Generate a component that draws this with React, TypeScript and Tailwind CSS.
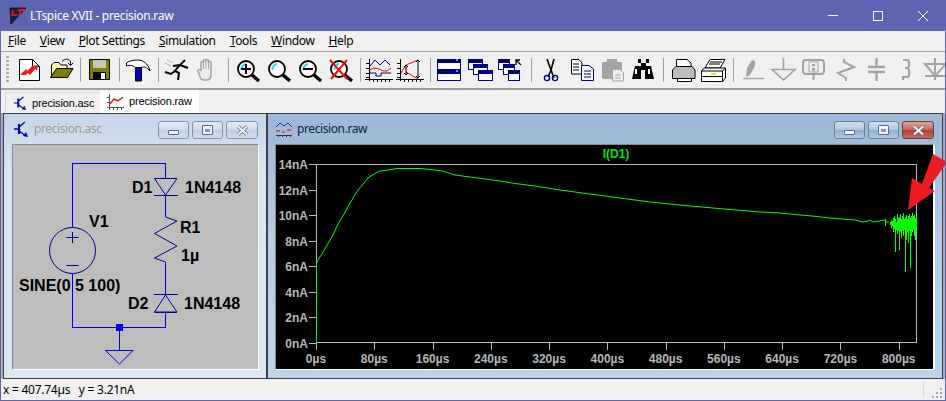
import React from "react";

const NAVY = "#000080";
const G = "#a3a3a3";

function Ic({ children }: { children: React.ReactNode }) {
  return (
    <div className="w-[31px] h-[24px] shrink-0">
      <svg width="31" height="24" viewBox="0 0 31 24" fill="none">{children}</svg>
    </div>
  );
}
const Sep = () => (
  <div className="w-[8px] h-[24px] shrink-0 flex justify-center">
    <div className="w-[1px] h-full bg-[#a0a0a0]" />
  </div>
);

function Lens({ children }: { children?: React.ReactNode }) {
  return (
    <g>
      <path d="M20 17 L27 23" stroke="#000" strokeWidth="3.4" />
      <circle cx="14" cy="11" r="8" fill="#fff" stroke="#000" strokeWidth="1.8" />
      <path d="M9.5 12 A5.5 5.5 0 0 1 14 6" stroke="#19d7e6" strokeWidth="1.8" />
      {children}
    </g>
  );
}
function PlotAxes() {
  return (
    <path
      d="M5.5 1V23M1 21.5H29M2 5.5H5M2 10.5H5M2 15.5H5M2 19.5H5M9.5 21V24M13.5 21V24M17.5 21V24M21.5 21V24M25.5 21V24"
      stroke="#000"
      shapeRendering="crispEdges"
    />
  );
}
function Win({ x, y, w, h, tb = 4 }: { x: number; y: number; w: number; h: number; tb?: number }) {
  return (
    <g shapeRendering="crispEdges">
      <rect x={x + 0.5} y={y + 0.5} width={w} height={h} fill="#fff" stroke={NAVY} />
      <rect x={x} y={y} width={w + 1} height={tb} fill={NAVY} />
    </g>
  );
}
function Transistor({ size = 16 }: { size?: number }) {
  return (
    <svg width={size} height={size} viewBox="0 0 16 16" fill="none">
      <path d="M6 3V13" stroke="#0000c0" strokeWidth="2.2" />
      <path d="M1 8H6M6 6L12 1M6 10L13 15" stroke="#0000c0" strokeWidth="1.4" />
      <path d="M10 15L15 16L13 11Z" fill="#0000c0" />
    </svg>
  );
}

const Toolbar = () => (
  <div className="h-[36px] flex items-center overflow-hidden">
    <div className="shrink-0 ml-[5px] mr-[5px] w-[3px] h-[28px] bg-[repeating-linear-gradient(to_bottom,#a8a8a8_0_2px,transparent_2px_4px)]" />
    {/* new */}
    <Ic>
      <path d="M5.5 1.5H18.5L25.5 8.5V22.5H5.5Z" fill="#fff" stroke="#000" />
      <path d="M18.5 1.5V8.5H25.5" stroke="#000" />
      <path d="M6 17L12 11L13.5 13L18 8L24 7L23 12.5L21 11L16 17L14 15L11.5 17Z" fill="#f01818" />
    </Ic>
    {/* open */}
    <Ic>
      <defs>
        <pattern id="dy" width="2" height="2" patternUnits="userSpaceOnUse">
          <rect width="2" height="2" fill="#ffff60" />
          <rect width="1" height="1" fill="#fff" />
          <rect x="1" y="1" width="1" height="1" fill="#fff" />
        </pattern>
      </defs>
      <path d="M6.5 19V7L9 4.5H14L16 7H22V11H12L6.5 19Z" fill="url(#dy)" stroke="#000" />
      <path d="M5.5 19.5L11.5 10.5H28L22.5 19.5Z" fill="#808000" stroke="#000" />
      <path d="M17 3.5C20 0.5 23 0.5 25.5 3V7M23 5L25.5 7.5L28 5" stroke="#000" />
    </Ic>
    <Sep />
    {/* save */}
    <Ic>
      <path d="M5.5 1.5H25.5V21.5H5.5Z" fill="#808000" stroke="#000" />
      <rect x="9" y="2" width="13" height="8" fill="#c8c8b0" />
      <rect x="9" y="14" width="13" height="7" fill="#000" />
      <rect x="17" y="15" width="4" height="6" fill="#fff" />
    </Ic>
    <Sep />
    {/* hammer */}
    <Ic>
      <path d="M12.5 9H18.5V23H12.5Z" fill="#0000c0" stroke="#000" />
      <path d="M3.5 5C6 3 10 2 14 2C20 2 25 5 27 13C24 9.5 21 8 19 9.5H12.5C10 7.5 7 6.5 3.5 8Z" fill="#fff" stroke="#000" />
    </Ic>
    <Sep />
    {/* run */}
    <Ic>
      <g stroke="#000" strokeWidth="2">
        <path d="M23 2L17 8L13 13L17 15L16 22" />
        <path d="M13 13L9 16L3 14" />
        <path d="M18 7L26 10M18 7L11 8" />
      </g>
      <path d="M5 2L11 5M3 5L9 8" stroke="#b0b0b0" />
    </Ic>
    {/* hand */}
    <Ic>
      <path
        d="M8 21L5 13C5 11 7 11 8 13V5C8 3 10.5 3 10.5 5V3C10.5 1 13 1 13 3V3C13 1 15.5 1 15.5 3V5C15.5 3 18 3 18 5V16C18 19 17 21 15 22H10Z"
        fill="#eee"
        stroke={G}
        strokeWidth="1.5"
      />
      <path d="M10.5 5V11M13 3V11M15.5 5V11" stroke={G} />
    </Ic>
    <Sep />
    <Ic>
      <Lens>
        <path d="M9 11H19M14 6V16" stroke="#000" strokeWidth="2" />
      </Lens>
    </Ic>
    <Ic>
      <Lens />
    </Ic>
    <Ic>
      <Lens>
        <path d="M9 11H19" stroke="#000" strokeWidth="2" />
      </Lens>
    </Ic>
    <Ic>
      <Lens>
        <path d="M5 2L22 21M22 2L6 21" stroke="#f01010" strokeWidth="2" />
      </Lens>
    </Ic>
    <Sep />
    {/* plot 1 */}
    <Ic>
      <PlotAxes />
      <path d="M6 8L11 2L16 7L21 2L26 7" stroke={NAVY} />
      <path d="M6 12L10 10L15 11L19 13L23 13L27 10" stroke="#f00000" />
      <path d="M6 15H12V18H17V15H27" stroke={NAVY} />
    </Ic>
    {/* plot 2 */}
    <Ic>
      <PlotAxes />
      <path d="M6 15L11 7L23 2M11 14L23 21" stroke="#f00000" />
      <path d="M11 7V17M9 9L11 7L13 9M9 15L11 17L13 15M23 2V20M21 4L23 2L25 4M21 18L23 20L25 18" stroke="#000" />
    </Ic>
    <Sep />
    {/* tile */}
    <Ic>
      <Win x={3} y={1} w={23} h={10} />
      <Win x={3} y={12} w={23} h={10} />
      <path d="M22 2H24M22 13H24" stroke="#fff" />
    </Ic>
    {/* cascade */}
    <Ic>
      <Win x={3} y={1} w={14} h={10} />
      <Win x={8} y={6} w={14} h={10} />
      <Win x={13} y={12} w={14} h={10} />
    </Ic>
    <Ic>
      <Win x={2} y={1} w={11} h={10} />
      <Win x={7} y={6} w={11} h={10} />
      <Win x={12} y={12} w={11} h={10} />
      <path d="M20 7V2H24M20 2L25 7" stroke="#000" strokeWidth="1.3" />
    </Ic>
    <Sep />
    {/* scissors */}
    <Ic>
      <path d="M12 1L16 12L19 20M19 1L16 12L13 19" stroke="#000" strokeWidth="1.6" />
      <circle cx="12" cy="20" r="2.6" fill="none" stroke={NAVY} strokeWidth="1.4" />
      <circle cx="20" cy="20" r="2.6" fill="none" stroke={NAVY} strokeWidth="1.4" />
    </Ic>
    {/* copy */}
    <Ic>
      <path d="M5.5 1.5H13L16 5V16H5.5Z" fill="#fff" stroke="#000" />
      <path d="M7 6H13M7 9H13M7 12H13" stroke="#000" />
      <path d="M15.5 7.5H23L27.5 11V22.5H15.5Z" fill="#fff" stroke={NAVY} />
      <path d="M18 13H25M18 16H25M18 19H25" stroke={NAVY} />
    </Ic>
    {/* paste */}
    <Ic>
      <rect x="5" y="4" width="20" height="17" rx="2" fill={G} />
      <rect x="10" y="1" width="10" height="4" fill={G} />
      <path d="M15.5 11.5H23L26.5 15V23H15.5Z" fill="#eee" stroke={G} />
      <path d="M18 17H24M18 20H24" stroke={G} />
    </Ic>
    {/* binoculars */}
    <Ic>
      <path d="M7 8H13V5H10V1H13V5H18V1H21V5H18V8H23L26 21H17V12H13V21H4Z" fill="#000" />
      <rect x="7" y="11" width="2" height="5" fill="#fff" />
      <rect x="20" y="11" width="2" height="5" fill="#fff" />
    </Ic>
    <Sep />
    {/* print */}
    <Ic>
      <path d="M9.5 1.5H20L24 5V11H9.5Z" fill="#fff" stroke="#000" />
      <path d="M5.5 12L9 8.5H25L28 12V20.5H5.5Z" fill="#bdbdbd" stroke="#000" />
      <path d="M10.5 20.5H24.5V23.5H10.5Z" fill="#fff" stroke="#000" />
    </Ic>
    {/* printer2 */}
    <Ic>
      <path d="M7 10L12 1.5H27L22 10Z" fill="#fff" stroke="#000" />
      <path d="M12 4H24M11 6H22" stroke="#000" />
      <path d="M3.5 13L6 10H27.5V20L24.5 23.5H3.5Z" fill="#fff" stroke="#000" />
      <path d="M3.5 13H24.5V23.5M24.5 13L27.5 10M3.5 18.5H24.5" stroke="#000" />
      <rect x="13" y="15" width="5" height="2" fill="#f0e020" />
    </Ic>
    <Sep />
    {/* gray circuit tools */}
    <Ic>
      <path d="M9 19L10 10L15 2L18 3L18 8L13 17Z" fill={G} />
      <path d="M6 20.5H27" stroke={G} strokeWidth="1.4" />
    </Ic>
    <Ic>
      <path d="M15.5 0V11M4 11.5H27L15.5 22Z" stroke={G} strokeWidth="1.6" />
    </Ic>
    <Ic>
      <rect x="4" y="2" width="21" height="14" rx="3" stroke={G} strokeWidth="2" />
      <rect x="10" y="4" width="9" height="10" fill="none" stroke={G} />
      <rect x="13" y="6" width="3" height="2" fill={G} />
      <rect x="13" y="10" width="3" height="3" fill={G} />
      <path d="M14.5 16V22" stroke={G} strokeWidth="2" />
    </Ic>
    <Ic>
      <path d="M14 1V4L24 9L8 15L16 20V23" stroke={G} strokeWidth="2" />
    </Ic>
    <Ic>
      <path d="M15.5 0V9M15.5 14V23M7 9H24M7 14H24" stroke={G} strokeWidth="2.4" />
    </Ic>
    <Ic>
      <path d="M11 2H15C18 2 18 10 15 10H13M15 10C18 10 18 19 15 19H11V22" stroke={G} strokeWidth="2.2" />
    </Ic>
    <Ic>
      <path d="M12 0V22M2 6H23L12 18Z M2 18H23" stroke={G} strokeWidth="2" />
    </Ic>
  </div>
);

function TBtn({ kind, active }: { kind: "min" | "max" | "close"; active?: boolean }) {
  const bg =
    kind === "close" && active
      ? "bg-[linear-gradient(to_bottom,#dca49c_0%,#c8665c_50%,#b23f34_52%,#c26a5c_100%)] border-[#6f3a3a]"
      : active
        ? "bg-[linear-gradient(to_bottom,#cfdeee_0%,#b0c6de_50%,#8fadcc_52%,#b4cbe2_100%)] border-[#6b7f96]"
        : "bg-[linear-gradient(to_bottom,#e2ecf6_0%,#cddcec_50%,#bccfe3_52%,#d2e0ef_100%)] border-[#8494a8]";
  const w = kind === "close" ? "w-[32px]" : "w-[31px]";
  return (
    <div className={`${w} h-[18px] rounded-[3px] border flex items-center justify-center ${bg}`}>
      {kind === "min" && <div className="w-[11px] h-[5px] mt-[5px] bg-[#f4f6f9] border border-[#5a6a80] rounded-[1px]" />}
      {kind === "max" && (
        <div className="w-[11px] h-[10px] bg-[#f4f6f9] border border-[#5a6a80] rounded-[1px] flex items-center justify-center">
          <div className="w-[5px] h-[3px] bg-[#8598ae]" />
        </div>
      )}
      {kind === "close" && (
        <svg width="13" height="11" viewBox="0 0 13 11">
          <path d="M2 1.5L11 9.5M11 1.5L2 9.5" stroke="#5a6a80" strokeWidth="3.6" />
          <path d="M2 1.5L11 9.5M11 1.5L2 9.5" stroke="#f4f6f9" strokeWidth="2" />
        </svg>
      )}
    </div>
  );
}

function Child({
  title,
  icon,
  active,
  widthClass,
  clientClass,
  titleClass,
  children,
}: {
  title: string;
  icon: React.ReactNode;
  active?: boolean;
  widthClass: string;
  clientClass: string;
  titleClass: string;
  children: React.ReactNode;
}) {
  return (
    <div
      className={`${widthClass} h-[266px] shrink-0 border border-[#3c4046] flex flex-col ${
        active
          ? "bg-[linear-gradient(to_bottom,#9cb8d6_0px,#b4cce6_120px,#b9d6ee_100%)]"
          : "bg-[linear-gradient(to_bottom,#c4d6e8_0px,#d8e6f3_60px,#dbe8f4_100%)]"
      }`}
    >
      <div className={`h-[30px] flex items-center shrink-0 ${active ? "pl-[8px] pr-[8px]" : "pl-[9px] pr-[8px]"}`}>
        <div className="w-[18px] flex items-center shrink-0">{icon}</div>
        <span className={`text-[12px] leading-none tracking-[-0.4px] ml-[3px] [font-family:'Noto_Sans',sans-serif] ${titleClass}`}>{title}</span>
        <div className="ml-auto flex gap-[3px] mt-[2px]">
          <TBtn kind="min" active={active} />
          <TBtn kind="max" active={active} />
          <TBtn kind="close" active={active} />
        </div>
      </div>
      <div className={clientClass}>{children}</div>
    </div>
  );
}

const sch = "[font-family:'Liberation_Sans',sans-serif] font-bold";

const Schematic = () => (
  <svg width="245" height="224" viewBox="13 145 245 224" fill="none" className="block">
    <g stroke="#0000e6" strokeWidth="1" shapeRendering="crispEdges">
      <path d="M72.5 227V163.5H165.5V178M72.5 274V327.5H165.5V312M119.5 327V351M165.5 195V217M165.5 262V294" />
    </g>
    <rect x="116" y="324" width="7" height="7" fill="#0000e6" />
    <g stroke="#000090" strokeWidth="1">
      <circle cx="72.5" cy="250.5" r="23" />
      <path d="M66.5 237.5H78.5M72.5 232V243M66.5 265.5H78.5" />
      <path d="M154.5 178.5H177L165.5 195ZM154 195.5H178" />
      <path d="M165.5 217L177 221L154.5 233.5L177 246L154.5 258L165.5 262" />
      <path d="M154 294.5H178M165.5 295L154.5 312H177Z M154.5 312.5H177" />
      <path d="M105.5 350.5H133L119.5 364Z" stroke="#0000e6" />
    </g>
    <g fontSize="16" fill="#000" className={sch}>
      <text x="132" y="193">D1</text>
      <text x="185" y="193">1N4148</text>
      <text x="89" y="227">V1</text>
      <text x="180" y="233">R1</text>
      <text x="181" y="261">1µ</text>
      <text x="19" y="291">SINE(0 5 100)</text>
      <text x="128" y="309">D2</text>
      <text x="184" y="309">1N4148</text>
    </g>
  </svg>
);

const yLabels = ["14nA", "12nA", "10nA", "8nA", "6nA", "4nA", "2nA", "0nA"];
const xLabels = ["0µs", "80µs", "160µs", "240µs", "320µs", "400µs", "480µs", "560µs", "640µs", "720µs", "800µs"];

const curve =
  "316.5,343 316.5,263 320,257 326,247 333,235 338,224 343,216 350,203 358,190 364,183 368,178 374,174 380,171 388,170 397,168.5 421,168.5 430,169.5 442,171 455,175 466,176.5 478,178 500,181 515,183.5 535,186 560,190 590,194 620,198 650,202 690,206 730,209.5 760,212 780,213 800,215 812,216 830,218 842,219 856,220 862,222 868,221 870,220 873,222 880,221 884,220 886,222 889,222";

const cols: [number, number, number][] = [
  [885, 219, 226], [890, 222, 225], [891, 220, 228], [892, 221, 226], [893, 218, 232], [894, 216, 229], [895, 219, 252],
  [896, 222, 230], [897, 214, 234], [898, 218, 231], [899, 217, 250], [900, 214, 232], [901, 219, 238], [902, 216, 231],
  [903, 213, 236], [904, 219, 230], [905, 217, 272], [906, 215, 240], [907, 219, 232], [908, 216, 243], [909, 214, 231],
  [910, 218, 268], [911, 216, 236], [912, 213, 232], [913, 216, 230], [914, 215, 236], [915, 218, 240], [916, 216, 232],
];

const Plot = () => (
  <svg width="657" height="224" viewBox="276 145 657 224" fill="none" className="block">
    <g stroke="#b8b8b8" strokeWidth="1" shapeRendering="crispEdges">
      <rect x="316.5" y="164.5" width="600" height="178" />
      {yLabels.map((_, i) => (
        <path key={i} d={`M309 ${Math.round(164 + i * 25.5) + 0.5}H316`} />
      ))}
      {xLabels.map((_, i) => (
        <path key={i} d={`M${Math.round(316 + i * 58.27) + 0.5} 343V350`} />
      ))}
    </g>
    <g fontSize="12" fill="#b4b8bc" className={sch}>
      {yLabels.map((l, i) => (
        <text key={l} x="308" y={Math.round(164 + i * 25.5) + 5} textAnchor="end">
          {l}
        </text>
      ))}
      {xLabels.map((l, i) => (
        <text key={l} x={316 + i * 58.27} y="363" textAnchor="middle">
          {l}
        </text>
      ))}
    </g>
    <text x="616" y="158" fontSize="12" fill="#00e600" textAnchor="middle" className={sch}>
      I(D1)
    </text>
    <polyline points={curve} stroke="#00ff00" strokeWidth="1" strokeLinejoin="round" />
    <g stroke="#00ff00" shapeRendering="crispEdges">
      {cols.map(([x, a, b]) => (
        <path key={x} d={`M${x + 0.5} ${a}V${b}`} />
      ))}
    </g>
  </svg>
);

export default function App() {
  return (
    <div className="relative w-[946px] h-[401px] overflow-hidden border-x border-b border-[#5b65b2] bg-[#f0f0f0] flex flex-col text-black [font-family:'Noto_Sans',sans-serif]">
      {/* title bar */}
      <div className="h-[31px] shrink-0 bg-[#5b65b2] flex items-center text-white">
        <svg width="18" height="18" viewBox="0 0 18 18" fill="none" className="ml-[8px]">
          <path d="M1 1H17L2 17Z" fill="#1c1c3c" stroke="#14142c" />
          <path d="M4 3L3 8H8M9 3H16M12 3L10 9" stroke="#d81828" strokeWidth="2" />
        </svg>
        <span className="ml-[3px] text-[12px] leading-none tracking-[-0.3px]">LTspice XVII - precision.raw</span>
        <div className="ml-auto flex">
          <div className="w-[45px] h-[31px] flex items-center justify-center">
            <div className="w-[10px] h-[1px] bg-white" />
          </div>
          <div className="w-[45px] h-[31px] flex items-center justify-center">
            <div className="w-[10px] h-[10px] border border-white" />
          </div>
          <div className="w-[45px] h-[31px] flex items-center justify-center">
            <svg width="10" height="10" viewBox="0 0 10 10">
              <path d="M0 0L10 10M10 0L0 10" stroke="#fff" />
            </svg>
          </div>
        </div>
      </div>
      {/* menu */}
      <div className="h-[21px] shrink-0 border-b border-[#a0a0a0] flex items-center pl-[7px] gap-[14px] text-[12px] leading-none tracking-[-0.35px]">
        <span><u>F</u>ile</span>
        <span><u>V</u>iew</span>
        <span><u>P</u>lot Settings</span>
        <span><u>S</u>imulation</span>
        <span><u>T</u>ools</span>
        <span><u>W</u>indow</span>
        <span><u>H</u>elp</span>
      </div>
      <Toolbar />
      <div className="h-[2px] shrink-0 bg-[#a0a0a0]" />
      {/* tabs */}
      <div className="h-[23px] shrink-0 flex items-end pl-[4px] text-[11px] leading-none tracking-[-0.15px] [font-family:'Liberation_Sans',sans-serif]">
        <div className="w-[95px] h-[21px] flex items-center pl-[7px] gap-[5px] bg-[#f0f0f0] border-t border-l border-[#dcdcdc]">
          <Transistor size={14} />
          <span>precision.asc</span>
        </div>
        <div className="w-[99px] h-[23px] flex items-center pl-[7px] gap-[5px] bg-white">
          <svg width="17" height="16" viewBox="0 0 17 16" fill="none">
            <path d="M2.5 0V16M0 13.5H17M0 3.5H2M0 8.5H2M6.5 14V16M10.5 14V16M14.5 14V16" stroke="#555" shapeRendering="crispEdges" />
            <path d="M3 10L7 5L11 7L16 3" stroke="#e81010" strokeWidth="1.4" />
          </svg>
          <span>precision.raw</span>
        </div>
      </div>
      {/* MDI */}
      <div className="h-[266px] shrink-0 bg-[#ababab] flex pl-[2px] pr-[2px]">
        <Child
          title="precision.asc"
          titleClass="text-[#9a9a9a]"
          widthClass="w-[264px]"
          icon={<Transistor />}
          clientClass="ml-[8px] mr-[7px] h-[226px] bg-[#bdbdbd] border-t border-l border-[#8a8a8a] border-r border-b border-r-white border-b-white"
        >
          <Schematic />
        </Child>
        <Child
          title="precision.raw"
          titleClass="text-[#10203a]"
          active
          widthClass="w-[676px]"
          icon={
            <svg width="16" height="16" viewBox="0 0 16 16" fill="none">
              <path d="M0 6L4 2L8 5L12 2L16 6" stroke="#1030c0" />
              <path d="M0 10H4M6 11H9M11 9H15" stroke="#e81010" />
              <path d="M0 14.5H16M2.5 14V16M6.5 14V16M10.5 14V16M14.5 14V16" stroke="#333" shapeRendering="crispEdges" />
            </svg>
          }
          clientClass="ml-[7px] mr-[7px] h-[226px] bg-black border-t border-l border-[#8a8a8a] border-r-2 border-b border-r-white border-b-white"
        >
          <Plot />
        </Child>
      </div>
      {/* status */}
      <div className="h-[21px] shrink-0 flex items-center pl-[2px] text-[12px] leading-none tracking-[-0.25px]">
        <span className="whitespace-pre">x = 407.74µs   y = 3.21nA</span>
        <div className="ml-auto mr-[3px] flex items-center gap-[6px] h-full">
          <div className="w-[1px] h-[16px] bg-[#d8d8d8]" />
          <svg width="12" height="12" viewBox="0 0 12 12" className="mt-[4px]">
            <path d="M10 2H12V4H10ZM6 6H8V8H6ZM10 6H12V8H10ZM2 10H4V12H2ZM6 10H8V12H6ZM10 10H12V12H10Z" fill="#a8a8a8" />
          </svg>
        </div>
      </div>
      {/* annotation arrow */}
      <svg width="946" height="401" viewBox="0 0 946 401" className="absolute left-[-1px] top-0 pointer-events-none">
        <path d="M908 210L912 178L922 184L933 154L947 162L929 188L935 191Z" fill="#ed1c24" />
      </svg>
    </div>
  );
}
